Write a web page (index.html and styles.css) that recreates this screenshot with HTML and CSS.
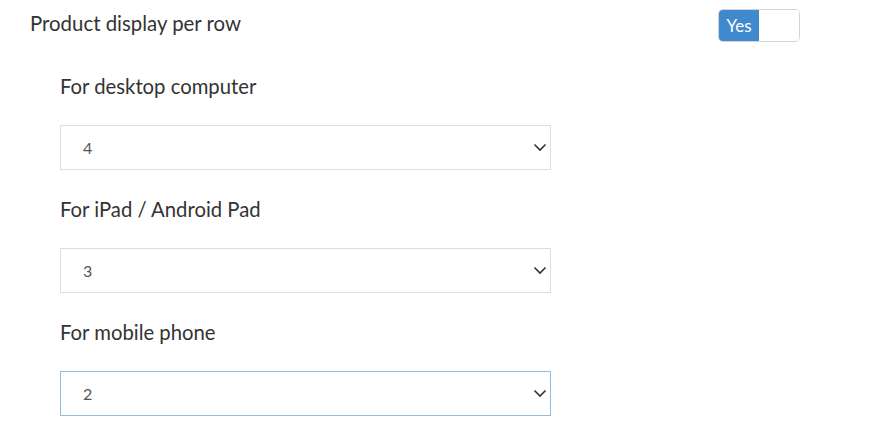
FILE: index.html
```html
<!DOCTYPE html>
<html>
<head>
<meta charset="utf-8">
<link rel="stylesheet" href="styles.css">
</head>
<body>
<div class="page">
  <div class="head">
    <div class="title">Product display per row</div>
    <div class="toggle"><span class="yes">Yes</span><span class="off"></span></div>
  </div>
  <div class="group">
    <div class="field">
      <div class="label">For desktop computer</div>
      <div class="select"><span class="val">4</span>
        <svg class="chev" width="14" height="9" viewBox="0 0 14 9"><path d="M1.5 1.5 L7 7 L12.5 1.5" fill="none" stroke="#333" stroke-width="1.6"/></svg>
      </div>
    </div>
    <div class="field">
      <div class="label">For iPad / Android Pad</div>
      <div class="select"><span class="val">3</span>
        <svg class="chev" width="14" height="9" viewBox="0 0 14 9"><path d="M1.5 1.5 L7 7 L12.5 1.5" fill="none" stroke="#333" stroke-width="1.6"/></svg>
      </div>
    </div>
    <div class="field">
      <div class="label">For mobile phone</div>
      <div class="select focus"><span class="val">2</span>
        <svg class="chev" width="14" height="9" viewBox="0 0 14 9"><path d="M1.5 1.5 L7 7 L12.5 1.5" fill="none" stroke="#333" stroke-width="1.6"/></svg>
      </div>
    </div>
  </div>
</div>
</body>
</html>
```
FILE: styles.css
```css
body { margin: 0; background: #fff; font-family: Lato, "Noto Sans", sans-serif; color: #333; }
.page { padding: 9px 93px 0 30px; }
.head { display: flex; justify-content: space-between; align-items: flex-start; }
.title { font-size: 20.4px; line-height: 28px; color: #333; }
.toggle { display: flex; width: 82px; height: 33px; border: 1px solid #d4d4d4; border-radius: 5px; overflow: hidden; box-sizing: border-box; }
.yes { background: #3f89cc; color: #fff; width: 40px; font-size: 17px; display: flex; align-items: center; justify-content: center; }
.off { flex: 1; background: #fff; }
.group { padding-left: 30px; width: 491px; padding-top: 30px; }
.field { margin-bottom: 25px; }
.label { font-size: 20.3px; line-height: 28px; margin-bottom: 25px; }
.select { height: 45px; border: 1px solid #ddd; box-sizing: border-box; display: flex; align-items: center; justify-content: space-between; padding: 0 3px 0 22px; }
.select.focus { border-color: #8fc0e0; }
.val { font-size: 16px; color: #555; }
```
